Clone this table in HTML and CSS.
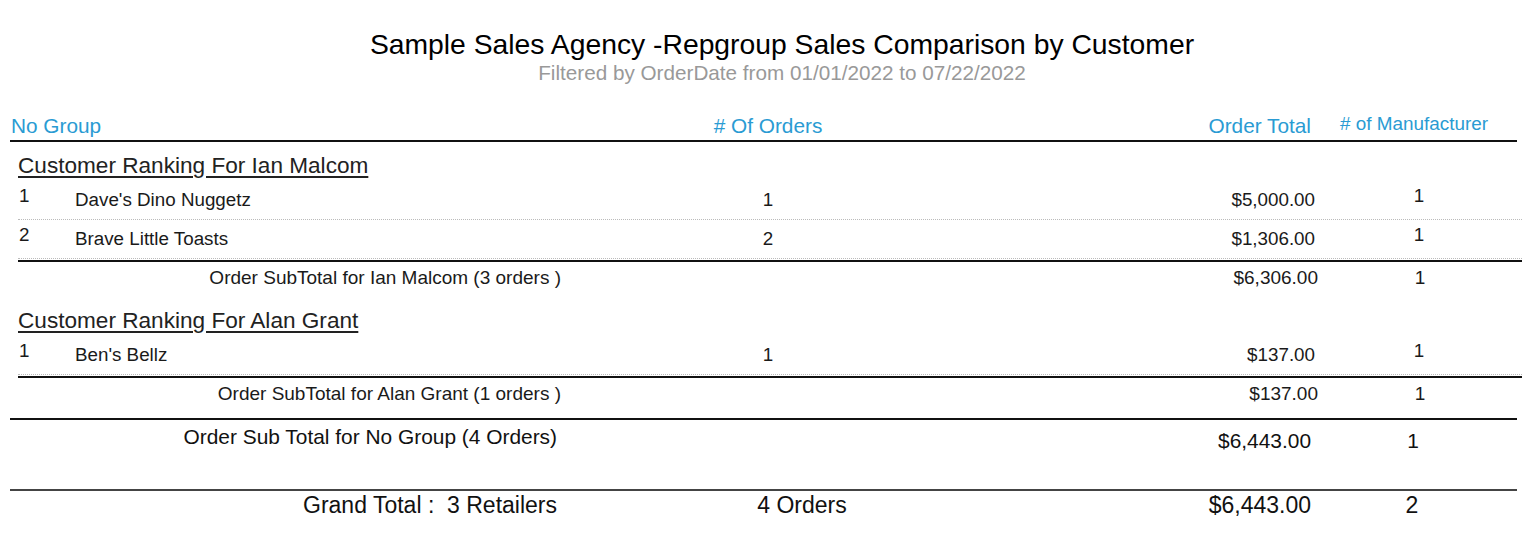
FILE: index.html
```html
<!DOCTYPE html>
<html>
<head>
    <link rel="stylesheet" href="styles.css">
</head>
<body>
    <div class="report">
        <div class="heading">
            <h1 class="title">Sample Sales Agency -Repgroup Sales Comparison by Customer</h1>
            <div class="subtitle">Filtered by OrderDate from 01/01/2022 to 07/22/2022</div>
        </div>

        <div class="colhead">
            <span class="ch-group">No Group</span>
            <span class="ch-orders"># Of Orders</span>
            <span class="ch-total">Order Total</span>
            <span class="ch-mfr"># of Manufacturer</span>
        </div>

        <div class="groups">
            <div class="group">
                <div class="group-title">Customer Ranking For Ian Malcom</div>
                <div class="rows">
                    <div class="row">
                        <span class="rank">1</span>
                        <span class="name">Dave's Dino Nuggetz</span>
                        <span class="orders">1</span>
                        <span class="total">$5,000.00</span>
                        <span class="mfr">1</span>
                    </div>
                    <div class="row">
                        <span class="rank">2</span>
                        <span class="name">Brave Little Toasts</span>
                        <span class="orders">2</span>
                        <span class="total">$1,306.00</span>
                        <span class="mfr">1</span>
                    </div>
                </div>
                <div class="subtotal">
                    <span class="sub-label">Order SubTotal for Ian Malcom (3 orders )</span>
                    <span class="sub-total">$6,306.00</span>
                    <span class="sub-mfr">1</span>
                </div>
            </div>

            <div class="group">
                <div class="group-title">Customer Ranking For Alan Grant</div>
                <div class="rows">
                    <div class="row">
                        <span class="rank">1</span>
                        <span class="name">Ben's Bellz</span>
                        <span class="orders">1</span>
                        <span class="total">$137.00</span>
                        <span class="mfr">1</span>
                    </div>
                </div>
                <div class="subtotal">
                    <span class="sub-label">Order SubTotal for Alan Grant (1 orders )</span>
                    <span class="sub-total">$137.00</span>
                    <span class="sub-mfr">1</span>
                </div>
            </div>
        </div>

        <div class="groupfoot">
            <span class="gf-label">Order Sub Total for No Group (4 Orders)</span>
            <span class="gf-total">$6,443.00</span>
            <span class="gf-mfr">1</span>
        </div>

        <div class="grand">
            <span class="gt-label">Grand Total :&nbsp; 3 Retailers</span>
            <span class="gt-orders">4 Orders</span>
            <span class="gt-total">$6,443.00</span>
            <span class="gt-mfr">2</span>
        </div>
    </div>
</body>
</html>
```

FILE: styles.css
```css
body
{
    margin: 0;
    background: #fff;
    color: #111;
    font-family: "Liberation Sans", Arial, sans-serif;
}
.report
{
    width: 1507px;
    margin-left: 10px;
    padding-top: 29px;
}
.heading
{
    padding-left: 37px;
}
.title
{
    margin: 0;
    font-size: 28.3px;
    line-height: 30px;
    font-weight: normal;
    text-align: center;
    color: #000;
}
.subtitle
{
    margin-top: 3px;
    font-size: 20.7px;
    line-height: 22px;
    text-align: center;
    color: #999;
}

/* column headings */
.colhead
{
    display: grid;
    grid-template-columns: 658px 200px 443px 206px;
    align-items: end;
    margin-top: 31px;
    padding-bottom: 3px;
    border-bottom: 2px solid #111;
    font-size: 20.8px;
    line-height: 22px;
    color: #2a9bd3;
}
.ch-group { padding-left: 1px; }
.ch-orders { text-align: center; }
.ch-total { text-align: right; }
.ch-mfr
{
    font-size: 18.9px;
    text-align: center;
    position: relative;
    top: -2px;
}

/* customer groups */
.groups
{
    margin-left: 8px;
    margin-right: -5px;
}
.group + .group
{
    margin-top: 6px;
}
.group-title
{
    font-size: 22.6px;
    line-height: 26px;
    color: #222;
    text-decoration: underline;
    text-underline-offset: 3px;
    margin-top: 11px;
    margin-bottom: 2px;
}
.group + .group .group-title
{
    margin-top: 0;
}
.rows
{
    padding-bottom: 1px;
    border-bottom: 2px solid #111;
}
.row
{
    display: grid;
    grid-template-columns: 57px 593px 200px 447px 207px;
    padding: 9px 0 9px;
    border-bottom: 1px dotted #bbb;
    font-size: 18.8px;
    line-height: 20px;
    color: #1a1a1a;
}
.rank,
.mfr
{
    position: relative;
    top: -4px;
    padding-left: 1px;
}
.orders { text-align: center; }
.total { text-align: right; }
.mfr { text-align: center; }

.subtotal
{
    display: grid;
    grid-template-columns: 543px 757px 204px;
    padding: 6px 0 14px;
    font-size: 19px;
    line-height: 20px;
    color: #1a1a1a;
}
.sub-label { text-align: right; }
.sub-total { text-align: right; }
.sub-mfr { text-align: center; }

/* group footer and grand total */
.groupfoot
{
    display: grid;
    grid-template-columns: 547px 754px 206px;
    padding: 10px 0 37px;
    border-top: 2px solid #111;
    border-bottom: 2px solid #444;
    font-size: 20.9px;
    line-height: 22px;
    color: #111;
}
.gf-label
{
    text-align: right;
    position: relative;
    top: -4px;
}
.gf-total { text-align: right; }
.gf-mfr
{
    text-align: center;
    padding-right: 2px;
}

.grand
{
    display: grid;
    grid-template-columns: 547px 490px 264px 206px;
    padding-top: 1px;
    font-family: "Liberation Sans Narrow", "Liberation Sans", Arial, sans-serif;
    font-size: 23px;
    line-height: 26px;
    color: #111;
}
.gt-label { text-align: right; }
.gt-orders { text-align: center; }
.gt-total { text-align: right; }
.gt-mfr
{
    text-align: center;
    padding-right: 4px;
}
```
